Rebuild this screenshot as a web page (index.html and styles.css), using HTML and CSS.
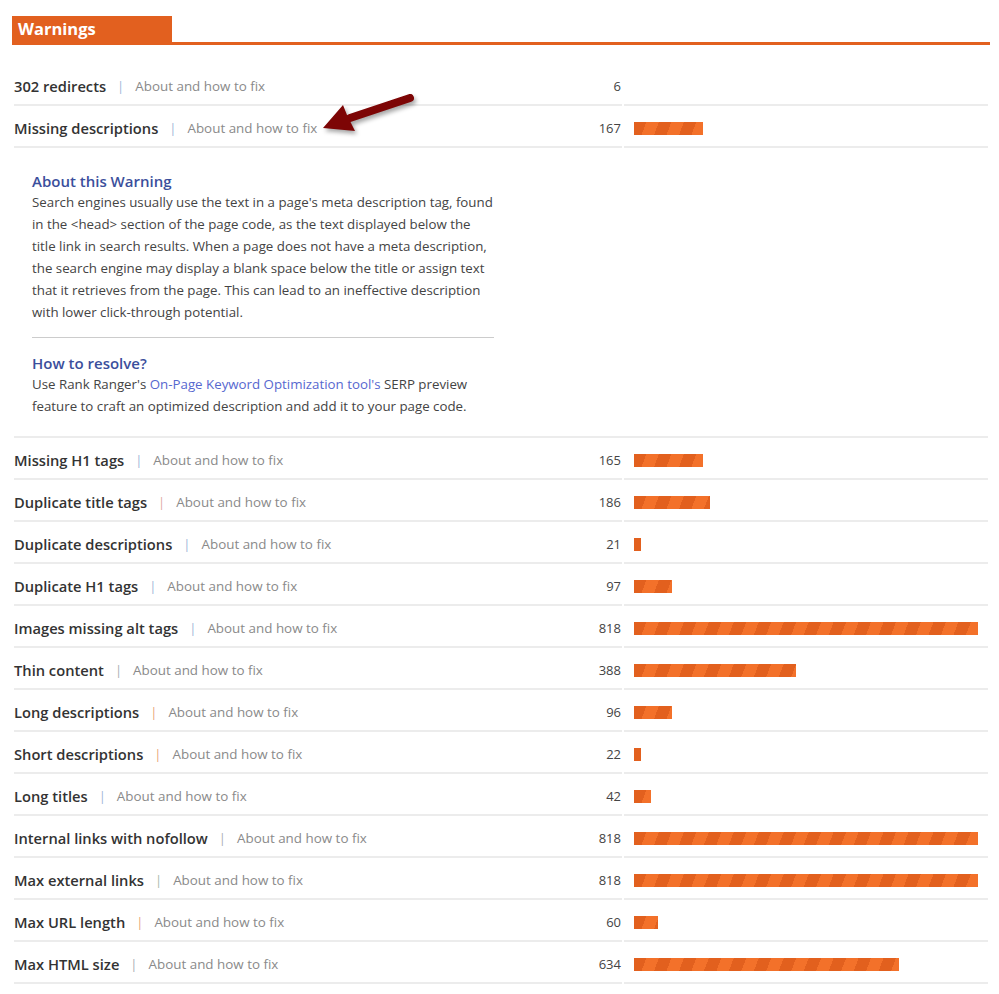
FILE: index.html
```html
<!DOCTYPE html>
<html lang="en">

<head>
    <meta charset="UTF-8">
    <meta name="viewport" content="width=device-width, initial-scale=1.0">
    <title>Site Audit - Warnings</title>
    <link rel="stylesheet" href="styles.css">
</head>

<body>

    <div class="report">

        <!-- Section Heading -->
        <div class="section-head">
            <h2>Warnings</h2>
        </div>

        <!-- Warning Rows -->
        <div class="rows">

            <div class="row">
                <div class="cell-main">
                    <span class="issue">302 redirects</span>
                    <span class="sep sep-blue">|</span>
                    <a class="fix" href="#">About and how to fix</a>
                    <span class="count">6</span>
                </div>
                <div class="cell-bar"></div>
            </div>

            <div class="row">
                <div class="cell-main">
                    <span class="issue">Missing descriptions</span>
                    <span class="sep sep-blue">|</span>
                    <a class="fix" href="#">About and how to fix</a>
                    <span class="count">167</span>
                </div>
                <div class="cell-bar"><span class="bar" style="width: 69px"></span></div>
            </div>

            <!-- Expanded help panel -->
            <div class="details">
                <h3>About this Warning</h3>
                <p>Search engines usually use the text in a page's meta description tag, found in the &lt;head&gt; section of the page code, as the text displayed below the title link in search results. When a page does not have a meta description, the search engine may display a blank space below the title or assign text that it retrieves from the page. This can lead to an ineffective description with lower click-through potential.</p>
                <hr>
                <h3>How to resolve?</h3>
                <p>Use Rank Ranger's <a href="#">On-Page Keyword Optimization tool's</a> SERP preview feature to craft an optimized description and add it to your page code.</p>
            </div>

            <div class="row">
                <div class="cell-main">
                    <span class="issue">Missing H1 tags</span>
                    <span class="sep sep-blue">|</span>
                    <a class="fix" href="#">About and how to fix</a>
                    <span class="count">165</span>
                </div>
                <div class="cell-bar"><span class="bar" style="width: 69px"></span></div>
            </div>

            <div class="row">
                <div class="cell-main">
                    <span class="issue">Duplicate title tags</span>
                    <span class="sep sep-rose">|</span>
                    <a class="fix" href="#">About and how to fix</a>
                    <span class="count">186</span>
                </div>
                <div class="cell-bar"><span class="bar" style="width: 76px"></span></div>
            </div>

            <div class="row">
                <div class="cell-main">
                    <span class="issue">Duplicate descriptions</span>
                    <span class="sep sep-blue">|</span>
                    <a class="fix" href="#">About and how to fix</a>
                    <span class="count">21</span>
                </div>
                <div class="cell-bar"><span class="bar" style="width: 7px"></span></div>
            </div>

            <div class="row">
                <div class="cell-main">
                    <span class="issue">Duplicate H1 tags</span>
                    <span class="sep sep-blue">|</span>
                    <a class="fix" href="#">About and how to fix</a>
                    <span class="count">97</span>
                </div>
                <div class="cell-bar"><span class="bar" style="width: 38px"></span></div>
            </div>

            <div class="row">
                <div class="cell-main">
                    <span class="issue">Images missing alt tags</span>
                    <span class="sep sep-blue">|</span>
                    <a class="fix" href="#">About and how to fix</a>
                    <span class="count">818</span>
                </div>
                <div class="cell-bar"><span class="bar" style="width: 344px"></span></div>
            </div>

            <div class="row">
                <div class="cell-main">
                    <span class="issue">Thin content</span>
                    <span class="sep sep-gray">|</span>
                    <a class="fix" href="#">About and how to fix</a>
                    <span class="count">388</span>
                </div>
                <div class="cell-bar"><span class="bar" style="width: 162px"></span></div>
            </div>

            <div class="row">
                <div class="cell-main">
                    <span class="issue">Long descriptions</span>
                    <span class="sep sep-orange">|</span>
                    <a class="fix" href="#">About and how to fix</a>
                    <span class="count">96</span>
                </div>
                <div class="cell-bar"><span class="bar" style="width: 38px"></span></div>
            </div>

            <div class="row">
                <div class="cell-main">
                    <span class="issue">Short descriptions</span>
                    <span class="sep sep-orange">|</span>
                    <a class="fix" href="#">About and how to fix</a>
                    <span class="count">22</span>
                </div>
                <div class="cell-bar"><span class="bar" style="width: 7px"></span></div>
            </div>

            <div class="row">
                <div class="cell-main">
                    <span class="issue">Long titles</span>
                    <span class="sep sep-blue">|</span>
                    <a class="fix" href="#">About and how to fix</a>
                    <span class="count">42</span>
                </div>
                <div class="cell-bar"><span class="bar" style="width: 17px"></span></div>
            </div>

            <div class="row">
                <div class="cell-main">
                    <span class="issue">Internal links with nofollow</span>
                    <span class="sep sep-gray">|</span>
                    <a class="fix" href="#">About and how to fix</a>
                    <span class="count">818</span>
                </div>
                <div class="cell-bar"><span class="bar" style="width: 344px"></span></div>
            </div>

            <div class="row">
                <div class="cell-main">
                    <span class="issue">Max external links</span>
                    <span class="sep sep-green">|</span>
                    <a class="fix" href="#">About and how to fix</a>
                    <span class="count">818</span>
                </div>
                <div class="cell-bar"><span class="bar" style="width: 344px"></span></div>
            </div>

            <div class="row">
                <div class="cell-main">
                    <span class="issue">Max URL length</span>
                    <span class="sep sep-orange">|</span>
                    <a class="fix" href="#">About and how to fix</a>
                    <span class="count">60</span>
                </div>
                <div class="cell-bar"><span class="bar" style="width: 24px"></span></div>
            </div>

            <div class="row">
                <div class="cell-main">
                    <span class="issue">Max HTML size</span>
                    <span class="sep sep-gray">|</span>
                    <a class="fix" href="#">About and how to fix</a>
                    <span class="count">634</span>
                </div>
                <div class="cell-bar"><span class="bar" style="width: 265px"></span></div>
            </div>

        </div>

        <!-- Callout arrow pointing at the open help link -->
        <svg class="callout" width="110" height="60" viewBox="0 0 110 60">
            <path d="M40 33 L100 13" stroke="#7d0505" stroke-width="8" stroke-linecap="round" fill="none" />
            <path d="M13 43 L33 20 L37 30 L45 46 Z" fill="#7d0505" />
        </svg>

    </div>

</body>

</html>
```

FILE: styles.css
```css
body {
    font-family: 'Open Sans', 'Noto Sans', sans-serif;
    background-color: #fff;
    color: #333;
    margin: 0;
    padding: 16px 0 0 12px;
}

.report {
    position: relative;
    width: 978px;
}

/* Section heading */
.section-head {
    border-bottom: 3px solid #e2601f;
}

.section-head h2 {
    width: 154px;
    height: 26px;
    margin: 0;
    padding-left: 6px;
    background-color: #e2601f;
    color: #fff;
    font-size: 16.5px;
    font-weight: 700;
    line-height: 26px;
}

/* Rows */
.rows {
    margin-top: 19px;
    padding: 0 2px;
}

.row {
    display: grid;
    grid-template-columns: 608px 364px;
    column-gap: 2px;
}

.cell-main,
.cell-bar {
    display: flex;
    align-items: center;
    height: 42px;
    padding-top: 4px;
    box-sizing: border-box;
    border-bottom: 2px solid #ececec;
}

.cell-main {
    padding-right: 1px;
}

.cell-bar {
    padding-left: 10px;
}

.issue {
    font-size: 14.7px;
    font-weight: 600;
    color: #333;
}

.sep {
    margin: 0 11px;
    font-size: 13px;
}

.sep-blue {
    color: #9fb6d8;
}

.sep-rose {
    color: #e0a8a4;
}

.sep-orange {
    color: #e9a679;
}

.sep-gray {
    color: #a9adb4;
}

.sep-green {
    color: #a9b7ad;
}

.fix {
    font-size: 13.4px;
    color: #8a8a8a;
    text-decoration: none;
}

.count {
    margin-left: auto;
    font-size: 13px;
    color: #444;
}

.bar {
    display: block;
    height: 13px;
    background: repeating-linear-gradient(111deg, #e2601e 0 11.6px, #f3712a 11.6px 23.3px);
}

/* Expanded help panel */
.details {
    padding: 23px 0 19px 18px;
    border-bottom: 2px solid #ececec;
}

.details h3 {
    margin: 0;
    font-size: 15px;
    font-weight: 600;
    line-height: 20px;
    color: #3b4f9c;
}

.details p {
    width: 462px;
    margin: 0;
    font-size: 13.3px;
    line-height: 22px;
    color: #444;
}

.details a {
    color: #5768cf;
    text-decoration: none;
}

.details hr {
    width: 462px;
    margin: 14px 0 15px;
    border: none;
    border-top: 1px solid #ccc;
}

/* Arrow callout */
.callout {
    position: absolute;
    left: 298px;
    top: 69px;
    filter: drop-shadow(2px 3px 2px rgba(0, 0, 0, 0.35));
}
```
